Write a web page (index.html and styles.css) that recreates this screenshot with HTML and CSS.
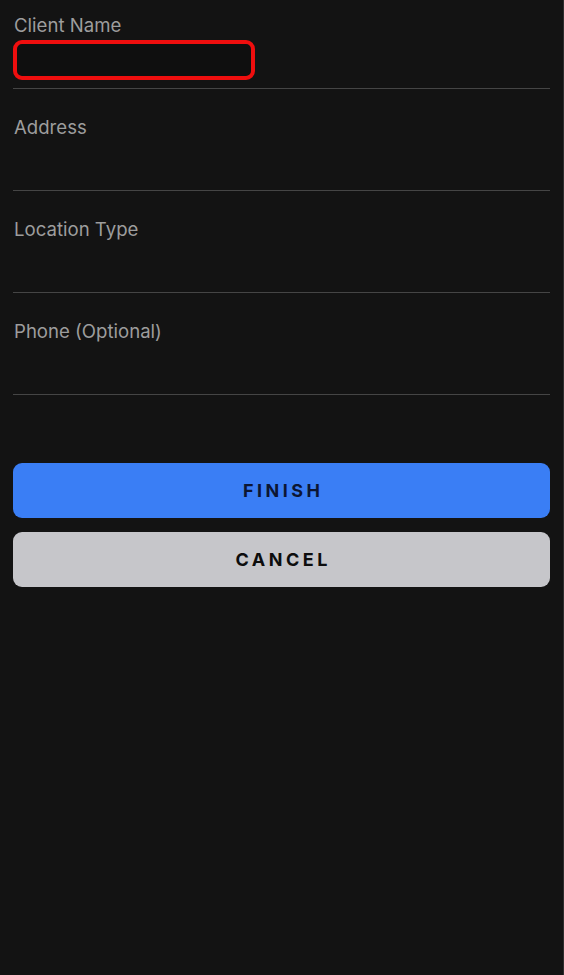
FILE: index.html
```html
<!DOCTYPE html>
<html lang="en">
<head>
<meta charset="utf-8">
<title>Client Form</title>
<link rel="stylesheet" href="styles.css">
</head>
<body>
<div class="page">
  <form class="form">
    <div class="field">
      <label class="label">Client Name</label>
      <div class="input input-error"></div>
    </div>
    <div class="field">
      <label class="label">Address</label>
      <div class="input"></div>
    </div>
    <div class="field">
      <label class="label">Location Type</label>
      <div class="input"></div>
    </div>
    <div class="field">
      <label class="label">Phone (Optional)</label>
      <div class="input"></div>
    </div>
  </form>
  <div class="actions">
    <button class="btn btn-primary" type="button">FINISH</button>
    <button class="btn btn-secondary" type="button">CANCEL</button>
  </div>
</div>
</body>
</html>
```
FILE: styles.css
```css
html, body {
  margin: 0;
  padding: 0;
  background: #131313;
  height: 100%;
}
.page {
  box-sizing: border-box;
  min-height: 100%;
  padding: 0 13px 0 13px;
  border-right: 1px solid #2e2e2e;
  font-family: Inter, "Noto Sans", sans-serif;
}
.form {
  display: flex;
  flex-direction: column;
  gap: 13px;
}
.field {
  padding-top: 14px;
  padding-bottom: 8px;
  border-bottom: 1px solid #454545;
}
.label {
  display: block;
  margin-left: 1px;
  font-size: 18.6px;
  line-height: 22px;
  color: #9d9d9d;
  margin-bottom: 4px;
}
.input {
  height: 40px;
  box-sizing: border-box;
}
.input-error {
  width: 242px;
  border: 4px solid #ef0e0e;
  border-radius: 9px;
  background: #0f0f0f;
}
.actions {
  display: flex;
  flex-direction: column;
  gap: 14px;
  margin-top: 68px;
}
.btn {
  height: 55px;
  border: none;
  border-radius: 9px;
  font-family: Inter, "Noto Sans", sans-serif;
  font-weight: 700;
  font-size: 18px;
  letter-spacing: 3.5px;
  padding: 0 0 0 3.5px;
}
.btn-primary {
  background: #3a7ef5;
  color: #0c1633;
}
.btn-secondary {
  background: #c6c6ca;
  color: #0d0d0d;
}
```
